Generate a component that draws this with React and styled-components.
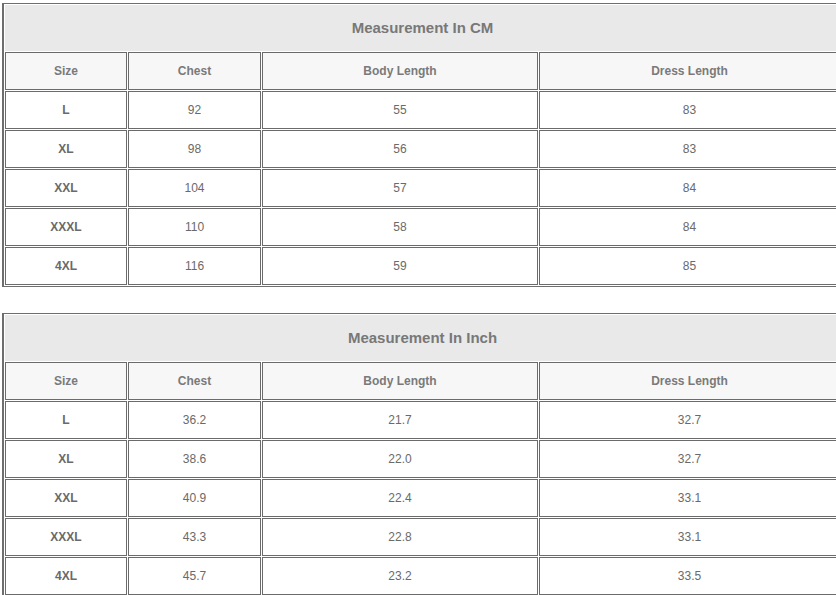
import styled, { createGlobalStyle } from "styled-components";

const GlobalStyle = createGlobalStyle`
  html, body {
    margin: 0;
    padding: 0;
    background: #ffffff;
    overflow: hidden;
  }
  body {
    font-family: "Liberation Sans", Arial, sans-serif;
  }
`;

const Page = styled.div`
  padding: 3px 0 0 3px;
  display: flex;
  flex-direction: column;
  gap: 26px;
`;

const Table = styled.table`
  width: 839px;
  table-layout: fixed;
  border-collapse: separate;
  border-spacing: 1px;
  border: 1px solid #6e6e6e;
  border-left-width: 2px;
  margin-left: -1px;
`;

const Col = styled.col`
  width: ${(p) => p.$w}px;
`;

const TitleCell = styled.th`
  height: 44px;
  padding: 0 0 2px;
  background: #e9e9e9;
  color: #787878;
  font-size: 15px;
  font-weight: bold;
  text-align: center;
  border: none;
`;

const HeadCell = styled.th`
  height: 36px;
  padding: 0;
  background: #f7f7f7;
  border: 1px solid #6b6b6b;
  color: #7a7a7a;
  font-size: 12px;
  font-weight: bold;
  text-align: center;
`;

const Cell = styled.td`
  height: 36px;
  padding: 0;
  background: #ffffff;
  border: 1px solid #6b6b6b;
  color: #6a6a6a;
  font-size: 12px;
  font-weight: ${(p) => (p.$bold ? "bold" : "normal")};
  text-align: center;
`;

const cmRows = [
  ["L", "92", "55", "83"],
  ["XL", "98", "56", "83"],
  ["XXL", "104", "57", "84"],
  ["XXXL", "110", "58", "84"],
  ["4XL", "116", "59", "85"],
];

const inchRows = [
  ["L", "36.2", "21.7", "32.7"],
  ["XL", "38.6", "22.0", "32.7"],
  ["XXL", "40.9", "22.4", "33.1"],
  ["XXXL", "43.3", "22.8", "33.1"],
  ["4XL", "45.7", "23.2", "33.5"],
];

const headers = ["Size", "Chest", "Body Length", "Dress Length"];

const SizeTable = ({ title, rows }) => (
  <Table>
    <colgroup>
      <Col $w={122} />
      <Col $w={133} />
      <Col $w={276} />
      <Col $w={301} />
    </colgroup>
    <thead>
      <tr>
        <TitleCell colSpan={4}>{title}</TitleCell>
      </tr>
      <tr>
        {headers.map((h) => (
          <HeadCell key={h}>{h}</HeadCell>
        ))}
      </tr>
    </thead>
    <tbody>
      {rows.map((r) => (
        <tr key={r[0]}>
          {r.map((v, i) => (
            <Cell key={i} $bold={i === 0}>
              {v}
            </Cell>
          ))}
        </tr>
      ))}
    </tbody>
  </Table>
);

const App = () => (
  <>
    <GlobalStyle />
    <Page>
      <SizeTable title="Measurement In CM" rows={cmRows} />
      <SizeTable title="Measurement In Inch" rows={inchRows} />
    </Page>
  </>
);

export default App;
